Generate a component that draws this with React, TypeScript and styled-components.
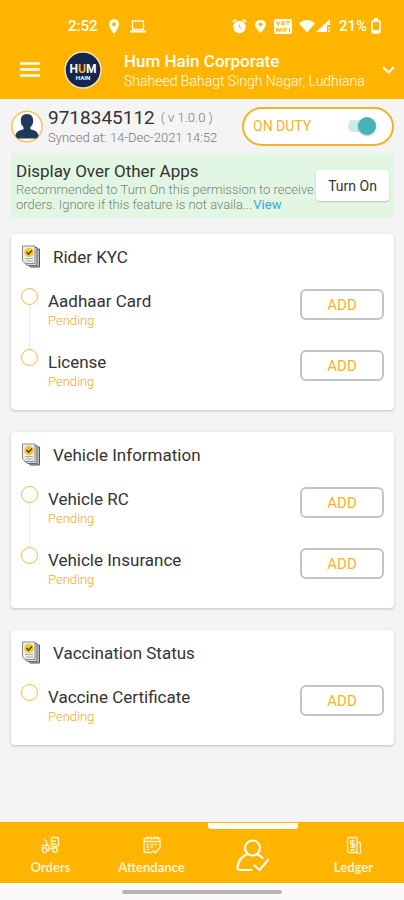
import React from "react";
import styled, { createGlobalStyle } from "styled-components";

const GlobalStyle = createGlobalStyle`
  * { box-sizing: border-box; }
  body {
    margin: 0;
    background: #f4f4f4;
    font-family: Roboto, "Liberation Sans", sans-serif;
    color: #333;
  }
  button { font-family: inherit; cursor: pointer; }
`;

const Screen = styled.div`
  display: flex;
  flex-direction: column;
  min-height: 100vh;
`;

const Header = styled.header`
  background: #ffb400;
  color: #fffdf5;
  padding-top: 12px;
`;

const StatusBar = styled.div`
  display: flex;
  align-items: center;
  justify-content: space-between;
  height: 28px;
  padding: 0 23px 0 68px;
  font-size: 15px;
  font-weight: 500;
`;

const StatusGroup = styled.div<{ $gap: number }>`
  display: flex;
  align-items: center;
  gap: ${(p) => p.$gap}px;
`;

const AppBar = styled.div`
  display: flex;
  align-items: center;
  height: 59px;
  padding: 0 9px 0 20px;
`;

const IconButton = styled.button`
  display: flex;
  padding: 0;
  border: 0;
  background: none;
  color: inherit;
`;

const LogoBox = styled.div`
  display: flex;
  margin: 0 22px 0 24px;
`;

const Company = styled.div`
  flex: 1;
  min-width: 0;
  padding-top: 2px;
`;

const CompanyName = styled.h1`
  margin: 0;
  font-size: 17px;
  line-height: 20px;
  font-weight: 500;
`;

const CompanyPlace = styled.div`
  font-size: 14px;
  line-height: 20px;
  font-weight: 300;
  white-space: nowrap;
`;

const Main = styled.main`
  flex: 1;
  padding: 0 10px 24px 11px;
`;

const Profile = styled.section`
  display: flex;
  align-items: center;
  gap: 5px;
  height: 54px;
`;

const ProfileText = styled.div`
  flex: 1;
  padding-top: 2px;
  white-space: nowrap;
`;

const Phone = styled.div`
  display: flex;
  align-items: center;
  gap: 6px;
  font-size: 19px;
  line-height: 22px;
`;

const Version = styled.span`
  font-size: 13px;
  font-weight: 300;
  color: #777;
`;

const Synced = styled.div`
  font-size: 13px;
  line-height: 18px;
  font-weight: 300;
  color: #777;
`;

const Duty = styled.label`
  display: flex;
  align-items: center;
  justify-content: space-between;
  width: 152px;
  height: 39px;
  padding: 0 16px 0 9px;
  border: 2px solid #f3b32a;
  border-radius: 20px;
  background: #fff;
  color: #f3b32a;
  font-size: 14px;
  cursor: pointer;
`;

const Switch = styled.input`
  appearance: none;
  display: flex;
  align-items: center;
  width: 28px;
  height: 18px;
  margin: 0;
  border-radius: 9px;
  background: linear-gradient(#cdeceb, #cdeceb) center / 100% 12px no-repeat;
  cursor: pointer;
  &::before {
    content: "";
    width: 18px;
    height: 18px;
    border-radius: 50%;
    background: #aaa;
  }
  &:checked::before {
    margin-left: auto;
    background: #43b5b7;
    box-shadow: 0 1px 2px rgba(0, 0, 0, 0.25);
  }
`;

const Banner = styled.section`
  display: flex;
  align-items: center;
  height: 65px;
  padding: 0 5px;
  background: #e2f7e3;
`;

const BannerText = styled.div`
  flex: 1;
`;

const BannerTitle = styled.h2`
  margin: 0;
  font-size: 17px;
  line-height: 22px;
  font-weight: 400;
`;

const BannerBody = styled.p`
  margin: 0;
  font-size: 13px;
  line-height: 15px;
  font-weight: 300;
  color: #768277;
`;

const ViewLink = styled.a`
  margin-left: 1px;
  color: #2fa9dc;
  font-weight: 400;
  text-decoration: none;
`;

const TurnOn = styled.button`
  width: 73px;
  height: 31px;
  padding: 0;
  border: 0;
  border-radius: 4px;
  background: #fff;
  color: #333;
  font-size: 14px;
  box-shadow: 0 1px 2px rgba(0, 0, 0, 0.2);
`;

const Cards = styled.div`
  display: flex;
  flex-direction: column;
  gap: 22px;
  margin-top: 16px;
`;

const Card = styled.section`
  padding: 0 10px 3px;
  border-radius: 4px;
  background: #fff;
  box-shadow: 0 1px 3px rgba(0, 0, 0, 0.22);
`;

const CardHead = styled.div`
  display: flex;
  align-items: center;
  gap: 11px;
  height: 45px;
`;

const CardTitle = styled.h2`
  margin: 0;
  font-size: 17px;
  font-weight: 400;
`;

const Steps = styled.ul`
  margin: 0;
  padding: 6px 0 0;
  list-style: none;
`;

const Step = styled.li`
  display: flex;
  height: 61px;
`;

const Rail = styled.div`
  display: flex;
  flex-direction: column;
  align-items: center;
  width: 17px;
  margin-right: 10px;
  padding-top: 3px;
`;

const Dot = styled.span`
  width: 17px;
  height: 17px;
  border: 1px solid #f6b740;
  border-radius: 50%;
`;

const Line = styled.span`
  flex: 1;
  width: 1px;
  margin-bottom: -3px;
  background: #e9e9e9;
`;

const StepText = styled.div`
  flex: 1;
  padding-top: 5px;
`;

const StepName = styled.div`
  font-size: 17px;
  line-height: 22px;
`;

const StepState = styled.div`
  font-size: 13px;
  line-height: 18px;
  font-weight: 300;
  color: #f7a81e;
`;

const AddButton = styled.button`
  width: 84px;
  height: 31px;
  margin-top: 4px;
  padding: 0;
  border: 2px solid #c4c4c4;
  border-radius: 6px;
  background: #fff;
  color: #f5b32f;
  font-size: 15px;
`;

const TabBar = styled.nav`
  display: grid;
  grid-template-columns: repeat(4, 1fr);
  height: 61px;
  background: #ffb400;
`;

const Tab = styled.a<{ $active?: boolean }>`
  display: flex;
  flex-direction: column;
  align-items: center;
  justify-content: ${(p) => (p.$active ? "space-between" : "flex-start")};
  gap: 4px;
  padding: ${(p) => (p.$active ? "1px 0 11px" : "14px 0 0")};
  color: ${(p) => (p.$active ? "#fffdf5" : "#fff1cc")};
  font-family: Lato, sans-serif;
  font-size: 13px;
  line-height: 18px;
  font-weight: 700;
  text-decoration: none;
`;

const Indicator = styled.span`
  width: 90px;
  height: 6px;
  border-radius: 0 0 3px 3px;
  background: #fffdf8;
`;

const GestureBar = styled.footer`
  display: flex;
  justify-content: center;
  padding: 7px 0 6px;
  background: #fafafa;
`;

const Handle = styled.span`
  width: 160px;
  height: 4px;
  border-radius: 2px;
  background: #b5b5b5;
`;

const Pin = ({ w, h }: { w: number; h: number }) => (
  <svg width={w} height={h} viewBox="0 0 14 20" preserveAspectRatio="none" aria-hidden="true">
    <path fill="currentColor" fillRule="evenodd" d="M7 0a7 7 0 0 0-7 7c0 5 7 13 7 13s7-8 7-13a7 7 0 0 0-7-7Zm0 4.3a2.7 2.7 0 1 1 0 5.400a2.700 2.700 0 0 1 0-5.400Z" />
  </svg>
);

const Laptop = () => (
  <svg width="16" height="13" viewBox="0 0 16 13" fill="none" stroke="currentColor" aria-hidden="true">
    <rect x="2.500" y="1" width="11" height="8.500" rx="1" strokeWidth="1.300" />
    <path d="M0 11.500h16" strokeWidth="2" />
  </svg>
);

const Alarm = () => (
  <svg width="15" height="16" viewBox="0 0 15 16" fill="none" aria-hidden="true">
    <circle cx="7.500" cy="9" r="6.200" fill="currentColor" />
    <path d="M1 4 4 1.500M14 4l-3-2.500" stroke="currentColor" strokeWidth="1.800" />
    <path d="M7.500 6.500V9l1.800 1.800" stroke="#ffb400" strokeWidth="1" />
  </svg>
);

const VoWifi = () => (
  <svg width="18" height="15" viewBox="0 0 18 15" fill="none" aria-hidden="true">
    <rect width="18" height="15" rx="2" fill="currentColor" />
    <path d="M2.500 2.500 4 6l1.500-3.500M8 3h2v2.500H8zM12 2.500h4M14 2.500V6M2 9l1 3.500L4.500 10 6 12.500 7 9M9 9v4M11 13V9h2M11 11h2M15.500 9v4" stroke="#ffb400" strokeWidth="1.100" />
  </svg>
);

const Signals = () => (
  <svg width="33" height="14" viewBox="0 0 33 14" fill="currentColor" aria-hidden="true">
    <path d="M0 4.500C4.500-.3 11.500-.3 16 4.500L8 13.500Z" />
    <path d="M31 0v6h-3v7H17Z" />
    <path d="M29 8h2v2h-2zM29 11h2v2h-2z" opacity=".7" />
  </svg>
);

const Battery = () => (
  <svg width="10" height="16" viewBox="0 0 10 16" fill="none" aria-hidden="true">
    <path d="M3 1h4" stroke="currentColor" strokeWidth="2" />
    <rect x="1" y="2.800" width="8" height="12" rx="1.500" stroke="currentColor" strokeWidth="1.700" />
    <path d="M2 12h6v2H2z" fill="currentColor" />
  </svg>
);

const MenuIcon = () => (
  <svg width="20" height="15" viewBox="0 0 20 15" aria-hidden="true">
    <path d="M0 1.500h20M0 7.500h20M0 13.500h20" stroke="currentColor" strokeWidth="2.600" />
  </svg>
);

const Chevron = () => (
  <svg width="13" height="8" viewBox="0 0 13 8" fill="none" aria-hidden="true">
    <path d="m1 1 5.500 5.500L12 1" stroke="currentColor" strokeWidth="2" />
  </svg>
);

const Logo = () => (
  <svg width="38" height="38" viewBox="0 0 38 38" role="img" aria-label="Hum Hain">
    <circle cx="19" cy="19" r="18" fill="#17264f" stroke="#f4e5bd" strokeWidth="1.500" />
    <text x="19" y="22" textAnchor="middle" fontFamily="Roboto, sans-serif" fontWeight="700" fontSize="12" fill="#fff">
      H<tspan fill="#ffb400">U</tspan>M
    </text>
    <text x="19" y="29" textAnchor="middle" fontFamily="Roboto, sans-serif" fontWeight="700" fontSize="6" fill="#fff">HAIN</text>
  </svg>
);

const Avatar = () => (
  <svg width="32" height="33" viewBox="0 0 32 33" role="img" aria-label="Profile">
    <circle cx="16" cy="16.500" r="15.200" fill="#fff" stroke="#f3c35a" strokeWidth="1.500" />
    <path fill="#203a5c" d="M16 4c4 0 6.200 2.800 6.200 6.500 0 3-1 5.200-2.700 6.500v2.200c4.500 1 8 2.800 8 6.800A15 15 0 0 1 25.500 28.500H6.500A15 15 0 0 1 4.500 26c0-4 3.500-5.800 8-6.800V17c-1.700-1.300-2.700-3.500-2.700-6.500C9.800 6.800 12 4 16 4Z" />
  </svg>
);

const Documents = () => (
  <svg width="21" height="23" viewBox="0 0 21 23" aria-hidden="true">
    <path d="M7 4h11.500v18H9.500L7 20Z" fill="#bbb" stroke="#555" />
    <path d="M4 2.500h12v18H6.500L4 18.500Z" fill="#ddd" stroke="#666" />
    <path d="M1.500 1h12.500v17.500H4.500L1.500 16Z" fill="#ececec" stroke="#8a8a8a" />
    <circle cx="8" cy="7.500" r="4.700" fill="#f4c624" />
    <path d="m5.500 7 2 2.200L11 5.500" fill="none" stroke="#3d3a2a" strokeWidth="1.300" />
    <path d="M4 13.500h8M5 16h7" stroke="#aaa" />
  </svg>
);

const OrdersIcon = () => (
  <svg width="19" height="18" viewBox="0 0 19 18" fill="none" stroke="currentColor" strokeWidth="1.400" strokeLinecap="round" strokeLinejoin="round" aria-hidden="true">
    <circle cx="3.500" cy="14" r="2.300" />
    <circle cx="14" cy="14" r="2.300" />
    <path d="M1 11c.5-2 2.500-2.500 4.500-1V5L3.500 3.500M5.500 7 8 11v3.500H6M11.500 1.500h4a2 2 0 0 1 2 2v5a2 2 0 0 1-2 2h-4a1 1 0 0 1-1-1v-7a1 1 0 0 1 1-1ZM10.500 5h4M12 8h3M9.500 12.500h2" />
  </svg>
);

const AttendanceIcon = () => (
  <svg width="20" height="18" viewBox="0 0 20 18" fill="none" stroke="currentColor" strokeWidth="1.400" strokeLinecap="round" strokeLinejoin="round" aria-hidden="true">
    <path d="M10 16.500H4a2 2 0 0 1-2-2V4a2 2 0 0 1 2-2h12a2 2 0 0 1 2 2v8M2 5.500h16M5.500 1v2M9 1v2M12.500 1v2M15.500 1v2" />
    <path d="m11 14.500 2.300 2.300 5-5.500" strokeWidth="1.600" />
    <path d="M5 8.500h1.500M9 8.500h1.500M13 8.500h1.500M5 11h1.500M9 11h1.500M5 13.500h1.500" />
  </svg>
);

const UserCheck = () => (
  <svg width="33" height="33" viewBox="0 0 33 33" fill="none" stroke="currentColor" strokeWidth="2.200" strokeLinecap="round" strokeLinejoin="round" aria-hidden="true">
    <circle cx="16.500" cy="9" r="7.500" />
    <path d="M11.500 15C5.500 17.500 2 22 1.500 28.500c0 1.500.5 2.500 2 2.500h12M21 15.200c2.500.9 4 2 5.500 3.800" />
    <path d="m18.500 26.500 5 4.500L32 21" />
  </svg>
);

const LedgerIcon = () => (
  <svg width="16" height="18" viewBox="0 0 16 18" fill="none" stroke="currentColor" strokeWidth="1.300" strokeLinejoin="round" aria-hidden="true">
    <path d="M3 1.500h6.500A1.500 1.500 0 0 1 11 3v13.500H3A1.500 1.500 0 0 1 1.500 15V3A1.500 1.500 0 0 1 3 1.500ZM11 6.500h2a1.500 1.500 0 0 1 1.500 1.500v7a1.800 1.800 0 0 1-3.500 1.500" />
    <path d="M8.500 5H4.500v3h4v3h-4M6.500 3.500v9M4 14h5" />
  </svg>
);

const groups = [
  { title: "Rider KYC", items: ["Aadhaar Card", "License"] },
  { title: "Vehicle Information", items: ["Vehicle RC", "Vehicle Insurance"] },
  { title: "Vaccination Status", items: ["Vaccine Certificate"] },
];

export default function App() {
  return (
    <Screen>
      <GlobalStyle />
      <Header>
        <StatusBar>
          <StatusGroup $gap={11}>
            <span>2:52</span>
            <Pin w={10} h={15} />
            <Laptop />
          </StatusGroup>
          <StatusGroup $gap={7}>
            <StatusGroup $gap={8}>
              <Alarm />
              <Pin w={11} h={13} />
              <VoWifi />
            </StatusGroup>
            <Signals />
            <StatusGroup $gap={4}>
              <span>21%</span>
              <Battery />
            </StatusGroup>
          </StatusGroup>
        </StatusBar>
        <AppBar>
          <IconButton aria-label="Menu"><MenuIcon /></IconButton>
          <LogoBox><Logo /></LogoBox>
          <Company>
            <CompanyName>Hum Hain Corporate</CompanyName>
            <CompanyPlace>Shaheed Bahagt Singh Nagar, Ludhiana</CompanyPlace>
          </Company>
          <IconButton aria-label="Change company"><Chevron /></IconButton>
        </AppBar>
      </Header>
      <Main>
        <Profile>
          <Avatar />
          <ProfileText>
            <Phone>9718345112 <Version>( v 1.0.0 )</Version></Phone>
            <Synced>Synced at: 14-Dec-2021 14:52</Synced>
          </ProfileText>
          <Duty>
            ON DUTY
            <Switch type="checkbox" role="switch" defaultChecked />
          </Duty>
        </Profile>
        <Banner>
          <BannerText>
            <BannerTitle>Display Over Other Apps</BannerTitle>
            <BannerBody>
              Recommended to Turn On this permission to receive orders. Ignore if this feature is not availa...
              <ViewLink href="#view">View</ViewLink>
            </BannerBody>
          </BannerText>
          <TurnOn>Turn On</TurnOn>
        </Banner>
        <Cards>
          {groups.map((group) => (
            <Card key={group.title}>
              <CardHead>
                <Documents />
                <CardTitle>{group.title}</CardTitle>
              </CardHead>
              <Steps>
                {group.items.map((item, i) => (
                  <Step key={item}>
                    <Rail>
                      <Dot />
                      {i < group.items.length - 1 && <Line />}
                    </Rail>
                    <StepText>
                      <StepName>{item}</StepName>
                      <StepState>Pending</StepState>
                    </StepText>
                    <AddButton aria-label={`ADD ${item}`}>ADD</AddButton>
                  </Step>
                ))}
              </Steps>
            </Card>
          ))}
        </Cards>
      </Main>
      <TabBar>
        <Tab href="#orders"><OrdersIcon />Orders</Tab>
        <Tab href="#attendance"><AttendanceIcon />Attendance</Tab>
        <Tab href="#profile" $active aria-label="Profile" aria-current="page"><Indicator /><UserCheck /></Tab>
        <Tab href="#ledger"><LedgerIcon />Ledger</Tab>
      </TabBar>
      <GestureBar><Handle /></GestureBar>
    </Screen>
  );
}
